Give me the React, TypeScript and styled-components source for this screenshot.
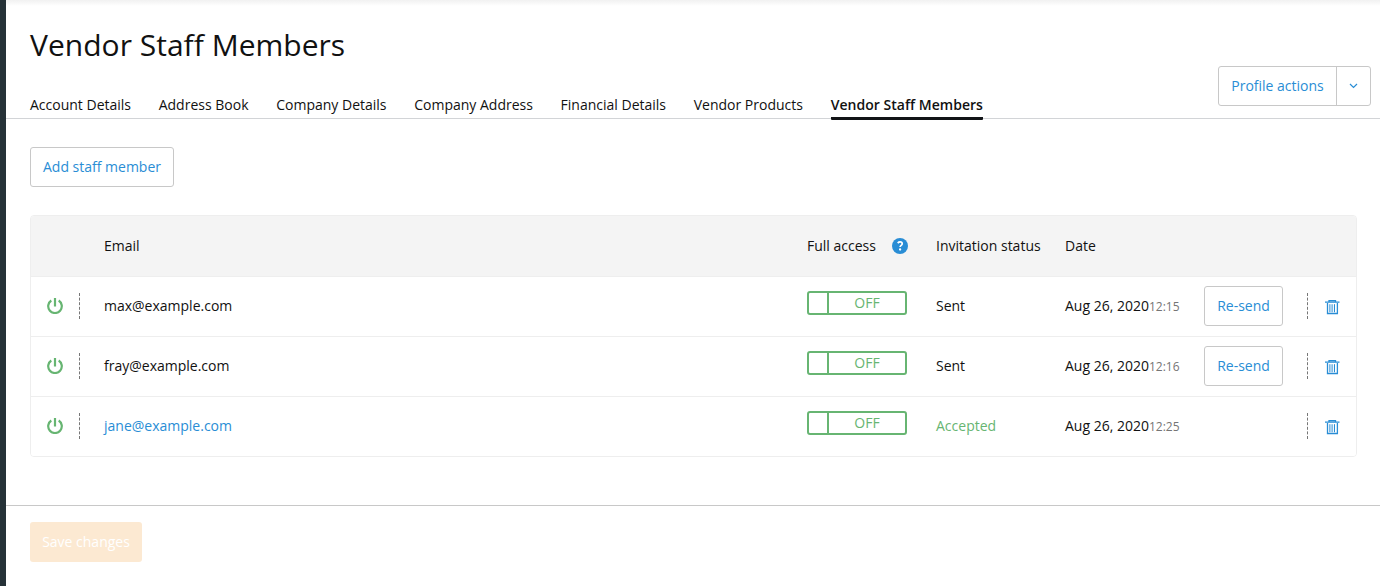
import React from "react";
import styled, { createGlobalStyle } from "styled-components";

const GlobalStyle = createGlobalStyle`
  *, *::before, *::after { box-sizing: border-box; }
  body {
    margin: 0;
    background: #fff;
    color: #111;
    font-family: "Open Sans", "Noto Sans", sans-serif;
    font-size: 14px;
    line-height: 20px;
  }
  button { font: inherit; cursor: pointer; }
`;

const blue = "#298dd5";
const green = "#67b572";

const Page = styled.div`
  display: flex;
  height: 586px;
  overflow: hidden;
`;

const SideStrip = styled.aside`
  flex: 0 0 6px;
  background: #263238;
`;

const Main = styled.main`
  flex: 1;
  min-width: 0;
  display: flex;
  flex-direction: column;
  background: linear-gradient(#f1f1f1, #fff 6px);
`;

const Header = styled.header`
  display: flex;
  justify-content: space-between;
  height: 119px;
  padding: 25px 9px 0 24px;
  border-bottom: 1px solid #d2d4d7;
`;

const Heading = styled.div`
  display: flex;
  flex-direction: column;
`;

const Title = styled.h1`
  margin: 0;
  font-size: 30px;
  line-height: 40px;
  font-weight: 400;
  letter-spacing: 0.02px;
  white-space: nowrap;
`;

const Tabs = styled.nav`
  display: flex;
  gap: 27.7px;
  margin-top: 30px;
`;

const Tab = styled.a<{ $active?: boolean }>`
  height: 25px;
  white-space: nowrap;
  color: #111;
  font-weight: ${(p) => (p.$active ? 600 : 400)};
  letter-spacing: ${(p) => (p.$active ? "0.03px" : "normal")};
  border-bottom: 3px solid ${(p) => (p.$active ? "#121417" : "transparent")};
  border-radius: 1px;
`;

const SplitButton = styled.div`
  display: flex;
  height: 40px;
  margin-top: 41px;
  border: 1px solid #c8c8c8;
  border-radius: 3px;
  background: #fff;
`;

const SplitPart = styled.button<{ $width: number }>`
  display: flex;
  align-items: center;
  justify-content: center;
  width: ${(p) => p.$width}px;
  padding: 0;
  border: 0;
  background: none;
  color: ${blue};
  white-space: nowrap;

  & + & { border-left: 1px solid #c8c8c8; }
`;

const OutlineButton = styled.button<{ $width: number }>`
  width: ${(p) => p.$width}px;
  height: 40px;
  padding: 0;
  border: 1px solid #c8c8c8;
  border-radius: 3px;
  background: #fff;
  color: ${blue};
  white-space: nowrap;
`;

const Content = styled.section`
  flex: 1;
  padding: 28px 23px 0 24px;
`;

const Table = styled.div`
  margin-top: 28px;
  border: 1px solid #eee;
  border-radius: 4px;
  overflow: hidden;
`;

const Row = styled.div<{ $head?: boolean }>`
  display: grid;
  grid-template-columns: 73px 1fr 129px 129px 139px 152px;
  align-items: center;
  height: ${(p) => (p.$head ? 61 : 60)}px;
  padding-bottom: ${(p) => (p.$head ? 0 : 1)}px;
  border-bottom: 1px solid #eee;
  background: ${(p) => (p.$head ? "#f4f4f4" : "#fff")};
  white-space: nowrap;

  &:last-child {
    height: 59px;
    border-bottom: 0;
  }
`;

const HeadCell = styled.div`
  display: flex;
  align-items: center;
  gap: 16px;
`;

const PowerCell = styled.div`
  display: flex;
  align-items: center;
  padding-left: 16px;
`;

const ActionCell = styled.div`
  display: flex;
  align-items: center;
`;

const Dashes = styled.span<{ $left: string }>`
  width: 1px;
  height: 26px;
  margin-left: ${(p) => p.$left};
  border-left: 1px dashed #777;
`;

const TrashButton = styled.button`
  display: flex;
  margin: 3px 16px 0 17px;
  padding: 0;
  border: 0;
  background: none;
`;

const Email = styled.span<{ $link?: boolean }>`
  color: ${(p) => (p.$link ? blue : "inherit")};
`;

const Status = styled.span<{ $accepted?: boolean }>`
  color: ${(p) => (p.$accepted ? green : "inherit")};
`;

const DateCell = styled.div`
  display: flex;
  align-items: baseline;
  height: 20px;
`;

const Time = styled.span`
  font-size: 12px;
  line-height: 16px;
  color: #757575;
`;

const Toggle = styled.div`
  display: flex;
  width: 100px;
  height: 24px;
  margin-bottom: 6px;
  border: 2px solid ${green};
  border-radius: 3px;
  color: ${green};
`;

const ToggleKnob = styled.span`
  width: 20px;
  border-right: 2px solid ${green};
`;

const ToggleLabel = styled.span`
  flex: 1;
  text-align: center;
`;

const Footer = styled.footer`
  height: 81px;
  padding: 16px 24px;
  border-top: 1px solid #c8c8c8;
`;

const SaveButton = styled.button`
  width: 112px;
  height: 40px;
  padding: 0;
  border: 0;
  border-radius: 3px;
  background: #fce9d2;
  color: #fff;
`;

const PowerIcon = () => (
  <svg width="16" height="16" viewBox="0 0 16 16" fill="none" stroke={green} strokeWidth="2.2">
    <path d="M4.3 2.5A6.8 6.8 0 1 0 11.7 2.5M8 0v8.5" />
  </svg>
);

const TrashIcon = () => (
  <svg width="15" height="15" viewBox="0 0 15 15" fill="none" stroke={blue}>
    <path d="M0 2.2h14.5M4 2V.7h6.5V2" strokeWidth="1.3" />
    <path d="M2.5 3v10.5h9.9V3" strokeWidth="1.3" />
    <path d="M4.9 4.2v8M9.5 4.2v8" />
    <path d="M7.2 4.2v8" strokeWidth="1.8" strokeOpacity="0.6" />
  </svg>
);

const HelpIcon = () => (
  <svg width="16" height="16" viewBox="0 0 16 16" fill="none">
    <circle cx="8" cy="8" r="8" fill={blue} />
    <path d="M5.7 5.1C6.5 4.2 7.2 3.9 8.1 3.9c1.3 0 2.1.7 2.1 1.8 0 1.6-2.1 1.6-2.1 3.3" stroke="#fff" strokeWidth="1.7" />
    <circle cx="8.1" cy="11.5" r="1.15" fill="#fff" />
  </svg>
);

const ChevronIcon = () => (
  <svg width="9" height="6" viewBox="0 0 9 6" fill="none" stroke={blue} strokeWidth="1.2">
    <path d="M1 1l3.5 3.5L8 1" />
  </svg>
);

const tabs = [
  "Account Details",
  "Address Book",
  "Company Details",
  "Company Address",
  "Financial Details",
  "Vendor Products",
  "Vendor Staff Members",
];

const staff = [
  { email: "max@example.com", accepted: false, time: "12:15" },
  { email: "fray@example.com", accepted: false, time: "12:16" },
  { email: "jane@example.com", accepted: true, time: "12:25" },
];

export default function App() {
  return (
    <Page>
      <GlobalStyle />
      <SideStrip />
      <Main>
        <Header>
          <Heading>
            <Title>Vendor Staff Members</Title>
            <Tabs>
              {tabs.map((t) => (
                <Tab key={t} $active={t === "Vendor Staff Members"}>{t}</Tab>
              ))}
            </Tabs>
          </Heading>
          <SplitButton>
            <SplitPart $width={117}>Profile actions</SplitPart>
            <SplitPart $width={34} aria-label="More"><ChevronIcon /></SplitPart>
          </SplitButton>
        </Header>
        <Content>
          <OutlineButton $width={144}>Add staff member</OutlineButton>
          <Table>
            <Row $head>
              <span />
              <HeadCell>Email</HeadCell>
              <HeadCell>Full access <HelpIcon /></HeadCell>
              <HeadCell>Invitation status</HeadCell>
              <HeadCell>Date</HeadCell>
              <span />
            </Row>
            {staff.map((s) => (
              <Row key={s.email}>
                <PowerCell>
                  <PowerIcon />
                  <Dashes $left="16px" />
                </PowerCell>
                <Email $link={s.accepted}>{s.email}</Email>
                <Toggle>
                  <ToggleKnob />
                  <ToggleLabel>OFF</ToggleLabel>
                </Toggle>
                <Status $accepted={s.accepted}>{s.accepted ? "Accepted" : "Sent"}</Status>
                <DateCell>Aug 26, 2020<Time>{s.time}</Time></DateCell>
                <ActionCell>
                  {!s.accepted && <OutlineButton $width={79}>Re-send</OutlineButton>}
                  <Dashes $left="auto" />
                  <TrashButton aria-label="Delete"><TrashIcon /></TrashButton>
                </ActionCell>
              </Row>
            ))}
          </Table>
        </Content>
        <Footer>
          <SaveButton>Save changes</SaveButton>
        </Footer>
      </Main>
    </Page>
  );
}
